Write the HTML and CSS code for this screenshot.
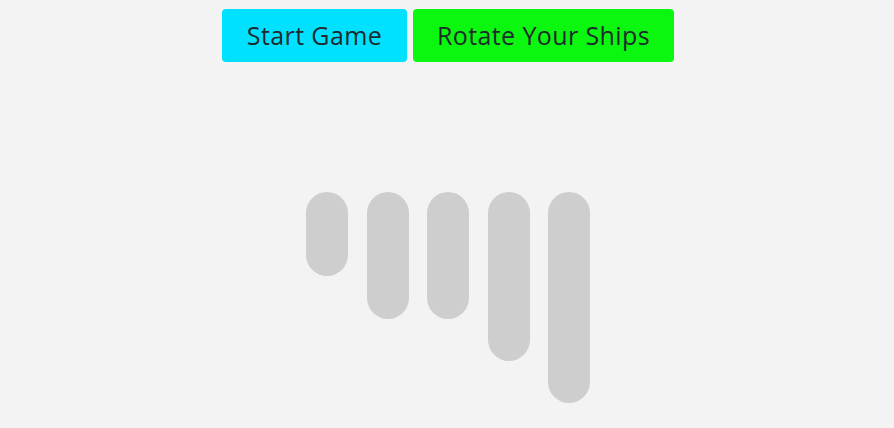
FILE: index.html
```html
<!DOCTYPE html>
<html lang="en">
<head>
<meta charset="utf-8">
<title>Battleship</title>
<link rel="stylesheet" href="styles.css">
</head>
<body>
<div class="controls">
  <button class="btn btn-start">Start Game</button>
  <button class="btn btn-rotate">Rotate Your Ships</button>
</div>
<div class="fleet">
  <div class="ship ship-2"></div>
  <div class="ship ship-3"></div>
  <div class="ship ship-3"></div>
  <div class="ship ship-4"></div>
  <div class="ship ship-5"></div>
</div>
</body>
</html>
```
FILE: styles.css
```css
html, body {
  margin: 0;
  padding: 0;
  background: #f3f3f3;
}
body {
  font-family: "Open Sans", "DejaVu Sans", sans-serif;
  padding-left: 2px;
}
.controls {
  display: flex;
  justify-content: center;
  gap: 6px;
  padding-top: 9px;
}
.btn {
  height: 53px;
  padding: 0 0 2px;
  border: none;
  border-radius: 4px;
  font-family: "Open Sans", "DejaVu Sans", sans-serif;
  font-size: 25px;
  color: #1e2a2c;
  letter-spacing: 0.4px;
  white-space: nowrap;
  text-align: center;
  cursor: pointer;
}
.btn-start {
  background: #00e1ff;
  width: 185px;
}
.btn-rotate {
  background: #0bf70f;
  width: 261px;
}
.fleet {
  display: flex;
  justify-content: center;
  align-items: flex-start;
  gap: 18.5px;
  margin-top: 130px;
}
.ship {
  width: 42px;
  background: #cecece;
  border-radius: 21px;
}
.ship-2 { height: 84px; }
.ship-3 { height: 127px; }
.ship-4 { height: 169px; }
.ship-5 { height: 211px; }
```
